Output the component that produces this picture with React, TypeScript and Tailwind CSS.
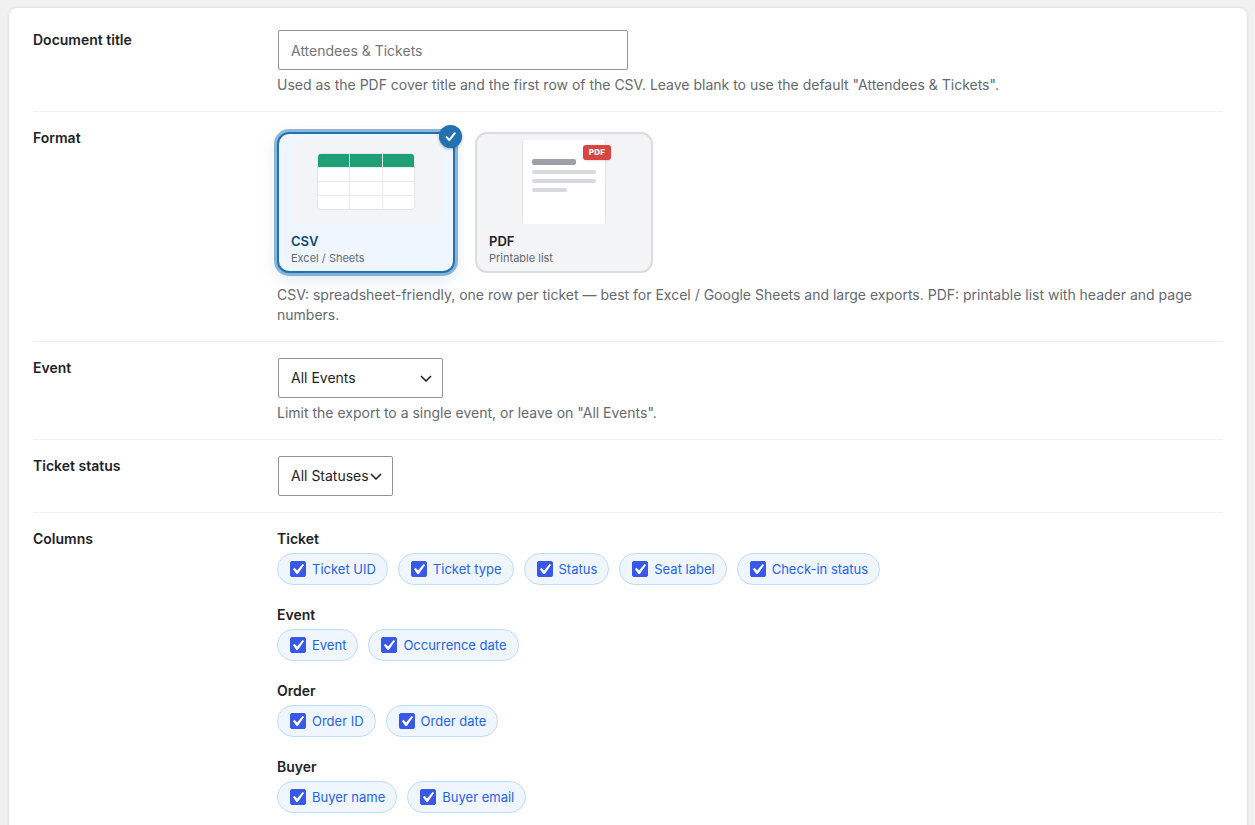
import { useState, type ReactNode } from 'react';
import clsx from 'clsx';

const COLUMN_GROUPS = [
  { title: 'Ticket', columns: ['Ticket UID', 'Ticket type', 'Status', 'Seat label', 'Check-in status'] },
  { title: 'Event', columns: ['Event', 'Occurrence date'] },
  { title: 'Order', columns: ['Order ID', 'Order date'] },
  { title: 'Buyer', columns: ['Buyer name', 'Buyer email'] },
];

type Format = 'csv' | 'pdf';

interface RowProps {
  label: string;
  htmlFor?: string;
  children: ReactNode;
}

function Row({ label, htmlFor, children }: RowProps) {
  return (
    <div className="flex border-b border-[#f0f0f1] py-4 last:border-b-0">
      <div className="w-[244px] shrink-0 pr-4 font-semibold text-[#1d2327]">
        {htmlFor ? <label htmlFor={htmlFor}>{label}</label> : <span>{label}</span>}
      </div>
      <div className="min-w-0 flex-1">{children}</div>
    </div>
  );
}

function Description({ children }: { children: ReactNode }) {
  return <p className="mt-[5px] text-[#646970]">{children}</p>;
}

interface SelectProps {
  id: string;
  options: string[];
  className: string;
}

function Select({ id, options, className }: SelectProps) {
  return (
    <div className={clsx('relative ml-px', className)}>
      <select
        id={id}
        className="block h-10 w-full appearance-none rounded-[2px] border border-[#949494] bg-white pl-3 text-[#1e1e1e]"
      >
        {options.map((o) => (
          <option key={o}>{o}</option>
        ))}
      </select>
      <svg
        viewBox="0 0 12 8"
        className="pointer-events-none absolute top-4 right-[11px] h-2 w-3 fill-none stroke-[#1e1e1e] stroke-[1.5]"
      >
        <path d="M1 2l5 5 5-5" />
      </svg>
    </div>
  );
}

function CsvPreview() {
  return (
    <div className="flex h-[84px] justify-center rounded-lg bg-[#f3f4f6] pt-[13px]">
      <div className="grid h-[57px] w-[98px] grid-cols-3 grid-rows-4 gap-px overflow-hidden rounded-[4px] border border-[#e2e4e7] bg-[#e8eaed]">
        {Array.from({ length: 12 }, (_, i) => (
          <span key={i} className={i < 3 ? 'bg-[#1f9f75]' : 'bg-white'} />
        ))}
      </div>
    </div>
  );
}

function PdfPreview() {
  return (
    <div className="flex h-[84px] justify-center">
      <div className="relative w-[84px] rounded-[2px] border-x border-[#e2e4e7] bg-white px-[9px] pt-[19px]">
        <div className="h-[6px] w-11 rounded-[2px] bg-[#9ca1a9]" />
        <div className="mt-[5px] h-1 rounded-[2px] bg-[#d6d9df]" />
        <div className="mt-[5px] h-1 rounded-[2px] bg-[#d6d9df]" />
        <div className="mt-[5px] h-1 w-[35px] rounded-[2px] bg-[#d6d9df]" />
        <span className="absolute top-[5px] -right-[6px] h-[15px] w-7 rounded-[3px] bg-[#d94540] text-center text-[8px] leading-[15px] font-extrabold tracking-wide text-white shadow-sm">
          PDF
        </span>
      </div>
    </div>
  );
}

interface FormatCardProps {
  value: Format;
  title: string;
  hint: string;
  selected: boolean;
  onSelect: (value: Format) => void;
  children: ReactNode;
}

function FormatCard({ value, title, hint, selected, onSelect, children }: FormatCardProps) {
  return (
    <label
      className={clsx(
        'relative block w-[178px] cursor-pointer rounded-xl border-2 px-3 pt-[6px] pb-[6px]',
        selected
          ? 'border-[#2271b1] bg-[#f0f6ff] shadow-[0_0_0_3px_rgba(34,113,177,0.5),0_6px_18px_rgba(34,113,177,0.16)]'
          : 'border-[#dcdcde] bg-[#f3f4f6]',
      )}
    >
      <input
        type="radio"
        name="format"
        value={value}
        checked={selected}
        onChange={() => onSelect(value)}
        className="sr-only"
      />
      {children}
      <span className={clsx('mt-[7px] block text-[13px] leading-5 font-semibold', selected ? 'text-[#0a4b78]' : 'text-[#1d2327]')}>
        {title}
      </span>
      <span className="block text-[11px] leading-[14px] text-[#646970]">{hint}</span>
      {selected && (
        <span className="absolute -top-[9px] -right-[9px] flex h-[23px] w-[23px] items-center justify-center rounded-full bg-[#2271b1] shadow-[0_1px_3px_rgba(0,0,0,0.3)]">
          <svg viewBox="0 0 12 12" className="h-3 w-3 fill-none stroke-white stroke-2">
            <path d="M1.6 6.2l2.7 3L9.8 2.2" strokeLinecap="round" strokeLinejoin="round" />
          </svg>
        </span>
      )}
    </label>
  );
}

function ColumnChip({ name }: { name: string }) {
  const [checked, setChecked] = useState(true);

  return (
    <label className="flex h-8 cursor-pointer items-center gap-[6px] rounded-full border border-[#bfdbfe] bg-[#eff6ff] pr-[11px] pl-3 text-[13px] text-[#2563eb]">
      <span className="relative h-4 w-4">
        <input
          type="checkbox"
          checked={checked}
          onChange={(e) => setChecked(e.target.checked)}
          className="block h-4 w-4 appearance-none rounded-[2px] border border-[#949494] bg-white checked:border-[#3858e9] checked:bg-[#3858e9]"
        />
        {checked && (
          <svg viewBox="3 2 15 15" className="pointer-events-none absolute inset-0 h-4 w-4 fill-white">
            <path d="M14.83 4.89l1.34.94-5.81 8.38H9.02L5.78 9.67l1.34-1.25 2.57 2.4z" />
          </svg>
        )}
      </span>
      {name}
    </label>
  );
}

export default function App() {
  const [title, setTitle] = useState('');
  const [format, setFormat] = useState<Format>('csv');

  return (
    <div className="min-h-screen bg-[#f0f0f1] px-2 pt-2 font-['Inter',sans-serif] text-sm leading-5">
      <form className="ml-px rounded-lg bg-white px-6 pt-[6px] pb-4 shadow-[0_0_3px_rgba(0,0,0,0.14)]">
        <Row label="Document title" htmlFor="doc-title">
          <input
            id="doc-title"
            type="text"
            value={title}
            onChange={(e) => setTitle(e.target.value)}
            placeholder="Attendees & Tickets"
            className="ml-px block h-10 w-[350px] max-w-full rounded-[2px] border border-[#949494] px-3 text-[#1e1e1e] placeholder:text-[#757575]"
          />
          <Description>
            Used as the PDF cover title and the first row of the CSV. Leave blank to use the default "Attendees &amp; Tickets".
          </Description>
        </Row>

        <Row label="Format">
          <div className="mt-1 mb-3 flex flex-wrap gap-5">
            <FormatCard value="csv" title="CSV" hint="Excel / Sheets" selected={format === 'csv'} onSelect={setFormat}>
              <CsvPreview />
            </FormatCard>
            <FormatCard value="pdf" title="PDF" hint="Printable list" selected={format === 'pdf'} onSelect={setFormat}>
              <PdfPreview />
            </FormatCard>
          </div>
          <Description>
            CSV: spreadsheet-friendly, one row per ticket — best for Excel / Google Sheets and large exports. PDF: printable
            list with header and page numbers.
          </Description>
        </Row>

        <Row label="Event" htmlFor="event">
          <Select id="event" options={['All Events']} className="w-[165px]" />
          <Description>Limit the export to a single event, or leave on "All Events".</Description>
        </Row>

        <Row label="Ticket status" htmlFor="status">
          <Select id="status" options={['All Statuses']} className="w-[115px]" />
        </Row>

        <Row label="Columns">
          <div className="space-y-5">
            {COLUMN_GROUPS.map((group) => (
              <fieldset key={group.title}>
                <legend className="mb-1 font-semibold text-[#1d2327]">{group.title}</legend>
                <div className="flex flex-wrap gap-[10px]">
                  {group.columns.map((name) => (
                    <ColumnChip key={name} name={name} />
                  ))}
                </div>
              </fieldset>
            ))}
          </div>
        </Row>
      </form>
    </div>
  );
}
